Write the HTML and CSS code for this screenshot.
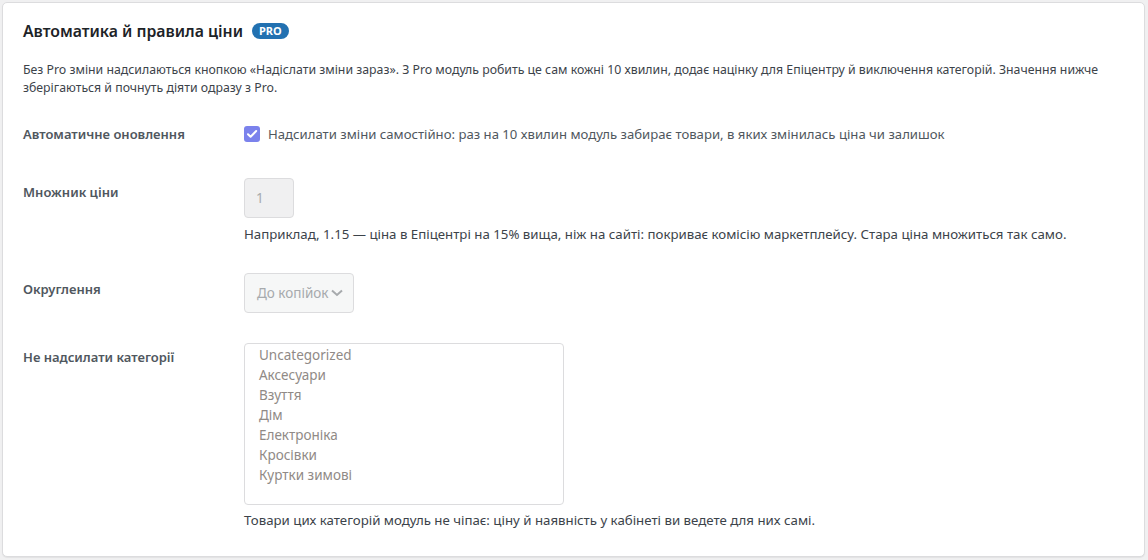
FILE: index.html
```html
<!DOCTYPE html>
<html lang="uk">
<head>
<meta charset="utf-8">
<title>Автоматика й правила ціни</title>
<link rel="stylesheet" href="styles.css">
</head>
<body>
<section class="card">
  <h2 class="card-title">Автоматика й правила ціни <span class="badge">PRO</span></h2>
  <p class="intro">Без Pro зміни надсилаються кнопкою «Надіслати зміни зараз». З Pro модуль робить це сам кожні 10 хвилин, додає націнку для Епіцентру й виключення категорій. Значення нижче зберігаються й почнуть діяти одразу з Pro.</p>

  <div class="row row-auto">
    <div class="label">Автоматичне оновлення</div>
    <div class="control">
      <label class="check">
        <span class="checkbox"><svg viewBox="0 0 16 16" width="16" height="16"><path d="M4 8.2l2.6 2.6L12.2 5" fill="none" stroke="#fff" stroke-width="2" stroke-linecap="round" stroke-linejoin="round"/></svg></span>
        <span>Надсилати зміни самостійно: раз на 10 хвилин модуль забирає товари, в яких змінилась ціна чи залишок</span>
      </label>
    </div>
  </div>

  <div class="row row-mult">
    <div class="label">Множник ціни</div>
    <div class="control">
      <div class="num-input">1</div>
      <p class="desc">Наприклад, 1.15 — ціна в Епіцентрі на 15% вища, ніж на сайті: покриває комісію маркетплейсу. Стара ціна множиться так само.</p>
    </div>
  </div>

  <div class="row row-round">
    <div class="label">Округлення</div>
    <div class="control">
      <div class="select">До копійок<svg class="chev" viewBox="0 0 14 10" width="14" height="10"><path d="M2 2.5l5 4.5 5-4.5" fill="none" stroke="#a7aaad" stroke-width="2"/></svg></div>
    </div>
  </div>

  <div class="row row-cats">
    <div class="label">Не надсилати категорії</div>
    <div class="control">
      <div class="listbox">
        <div class="opt">Uncategorized</div>
        <div class="opt">Аксесуари</div>
        <div class="opt">Взуття</div>
        <div class="opt">Дім</div>
        <div class="opt">Електроніка</div>
        <div class="opt">Кросівки</div>
        <div class="opt">Куртки зимові</div>
      </div>
      <p class="desc desc-cats">Товари цих категорій модуль не чіпає: ціну й наявність у кабінеті ви ведете для них самі.</p>
    </div>
  </div>
</section>
</body>
</html>
```

FILE: styles.css
```css
* { box-sizing: border-box; }
html, body { margin: 0; padding: 0; }
body {
  background: #f0f0f1;
  font-family: "Noto Sans", "Open Sans", sans-serif;
  color: #3c434a;
  font-size: 13px;
  height: 560px;
  overflow: hidden;
}
.card {
  margin: 2px 3px 0 2px;
  background: #fff;
  border: 1px solid #dcdcde;
  border-radius: 5px;
  box-shadow: 0 1px 1px rgba(0,0,0,0.06);
  padding: 16px 20px 27px 20px;
}
.card-title {
  margin: 0;
  font-size: 15.8px;
  line-height: 24px;
  font-weight: 600;
  color: #1d2327;
  display: flex;
  align-items: center;
}
.badge {
  display: inline-block;
  margin-left: 9px;
  background: #2271b1;
  color: #fff;
  font-size: 11px;
  font-weight: 700;
  line-height: 16px;
  height: 16px;
  padding: 0 7px;
  border-radius: 8px;
}
.intro {
  margin: 18px 0 8px 0;
  font-size: 12.3px;
  line-height: 18px;
  color: #3c434a;
}
.row {
  display: grid;
  grid-template-columns: 221px 1fr;
}
.label {
  font-size: 13px;
  font-weight: 600;
  color: #50575e;
  line-height: 18px;
  padding-top: 20px;
}
.row-auto { padding-bottom: 20px; }
.row-auto .control { padding-top: 20px; }
.check {
  display: flex;
  align-items: center;
  gap: 8px;
  font-size: 13.15px;
  line-height: 18px;
  color: #50575e;
}
.checkbox {
  width: 16px;
  height: 16px;
  border-radius: 3px;
  background: #7b82ec;
  display: flex;
  flex: none;
}
.row-mult { padding-bottom: 17px; }
.row-mult .control { padding-top: 15px; }
.num-input {
  width: 50px;
  height: 40px;
  background: #f0f0f1;
  border: 1px solid #dcdcde;
  border-radius: 4px;
  color: #a7aaad;
  font-size: 13.5px;
  line-height: 38px;
  padding-left: 11px;
}
.desc {
  margin: 7px 0 0 0;
  font-size: 13.25px;
  line-height: 18px;
  color: #3c434a;
}
.row-round { padding-bottom: 15px; }
.row-round .control { padding-top: 13px; }
.select {
  width: 110px;
  height: 40px;
  background: #f6f7f7;
  border: 1px solid #dcdcde;
  border-radius: 4px;
  color: #a7aaad;
  font-size: 13.5px;
  line-height: 38px;
  padding-left: 12px;
  display: flex;
  align-items: center;
  white-space: nowrap;
  overflow: hidden;
}
.chev { margin-left: 1px; flex: none; }
.row-cats .control { padding-top: 15px; }
.listbox {
  width: 320px;
  height: 162px;
  border: 1px solid #dcdcde;
  border-radius: 4px;
  background: #fff;
  padding: 1px 0 0 14px;
}
.opt {
  font-size: 13.5px;
  line-height: 20px;
  color: #908a86;
}
.desc-cats { margin-top: 6px; }
```
